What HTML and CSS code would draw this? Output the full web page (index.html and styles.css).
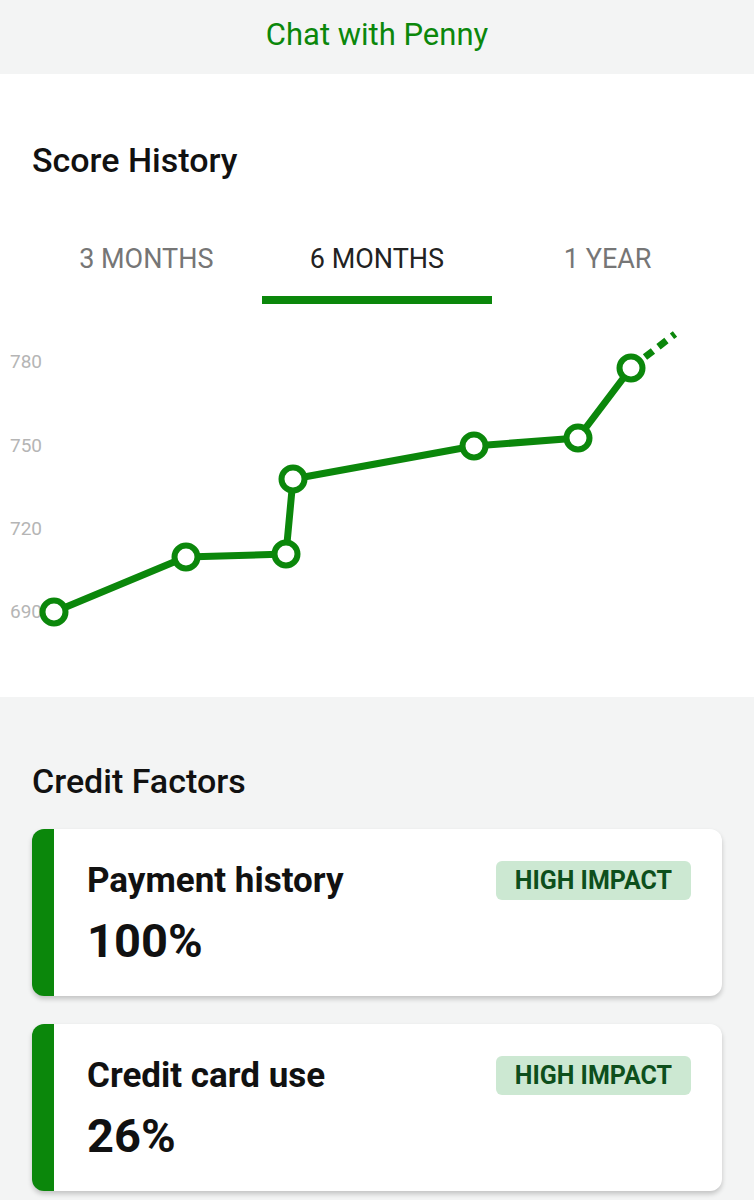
FILE: index.html
```html
<!DOCTYPE html>
<html lang="en">
<head>
    <meta charset="UTF-8">
    <meta name="viewport" content="width=device-width, initial-scale=1.0">
    <title>Score History</title>
    <link rel="stylesheet" href="styles.css">
</head>
<body>
    <div class="chat-bar">Chat with Penny</div>

    <section class="history">
        <h2 class="section-title">Score History</h2>
        <div class="tabs">
            <div class="tab">3 MONTHS</div>
            <div class="tab active">6 MONTHS</div>
            <div class="tab">1 YEAR</div>
        </div>

        <svg class="chart" viewBox="0 304 754 393" width="754" height="393">
            <g class="axis">
                <text x="10" y="368">780</text>
                <text x="10" y="452">750</text>
                <text x="10" y="535">720</text>
                <text x="10" y="618">690</text>
            </g>
            <polyline class="line" points="54,612 186,557 286,554 293,479 474,446 578,438 631,368"/>
            <line class="line dashed" x1="645" y1="357" x2="675" y2="334"/>
            <g class="dots">
                <circle cx="54" cy="612" r="11.5"/>
                <circle cx="186" cy="557" r="11.5"/>
                <circle cx="286" cy="554" r="11.5"/>
                <circle cx="293" cy="479" r="11.5"/>
                <circle cx="474" cy="446" r="11.5"/>
                <circle cx="578" cy="438" r="11.5"/>
                <circle cx="631" cy="368" r="11.5"/>
            </g>
        </svg>
    </section>

    <section class="factors">
        <h2 class="section-title">Credit Factors</h2>

        <div class="factor-card">
            <div class="factor-text">
                <div class="factor-name">Payment history</div>
                <div class="factor-value">100%</div>
            </div>
            <span class="badge">HIGH IMPACT</span>
        </div>

        <div class="factor-card">
            <div class="factor-text">
                <div class="factor-name">Credit card use</div>
                <div class="factor-value">26%</div>
            </div>
            <span class="badge">HIGH IMPACT</span>
        </div>
    </section>
</body>
</html>
```

FILE: styles.css
```css
body {
    font-family: Roboto, 'Noto Sans', sans-serif;
    margin: 0;
    background-color: #F3F4F4;
    color: #111111;
}
.chat-bar {
    height: 74px;
    line-height: 70px;
    text-align: center;
    font-size: 31px;
    color: #0B870B;
    background-color: #F3F4F4;
    border-radius: 0 0 6px 6px;
}
.history {
    background-color: #FFFFFF;
    padding-top: 66px;
}
.section-title {
    margin: 0 0 0 32px;
    font-size: 34px;
    font-weight: 500;
    line-height: 40px;
}
.tabs {
    display: flex;
    margin: 62px 31px 0;
}
.tab {
    flex: 1;
    text-align: center;
    font-size: 27px;
    color: #767676;
    padding-bottom: 20px;
    border-bottom: 8px solid transparent;
    line-height: 34px;
}
.tab.active {
    color: #222222;
    border-bottom-color: #0B870B;
}
.chart {
    display: block;
}
.axis text {
    font-size: 19px;
    fill: #B5B5B5;
}
.line {
    fill: none;
    stroke: #0B870B;
    stroke-width: 7;
    stroke-linejoin: round;
}
.dashed {
    stroke-dasharray: 10 7;
}
.dots circle {
    fill: #FFFFFF;
    stroke: #0B870B;
    stroke-width: 6;
}
.factors {
    padding: 64px 32px 8px;
}
.factors .section-title {
    margin: 0 0 28px 0;
}
.factor-card {
    display: flex;
    justify-content: space-between;
    align-items: flex-start;
    background-color: #FFFFFF;
    border-left: 22px solid #0B870B;
    border-radius: 12px;
    box-shadow: 0 3px 5px rgba(0, 0, 0, 0.2);
    padding: 32px 31px 0 33px;
    height: 167px;
    box-sizing: border-box;
    margin-bottom: 28px;
}
.factor-name {
    font-size: 35px;
    font-weight: bold;
    line-height: 40px;
}
.factor-value {
    font-size: 47px;
    font-weight: bold;
    line-height: 56px;
    margin-top: 12px;
}
.badge {
    background-color: #CCE8D2;
    color: #0D4F1C;
    font-size: 25px;
    font-weight: bold;
    padding: 0 19px;
    line-height: 39px;
    border-radius: 6px;
}
```
